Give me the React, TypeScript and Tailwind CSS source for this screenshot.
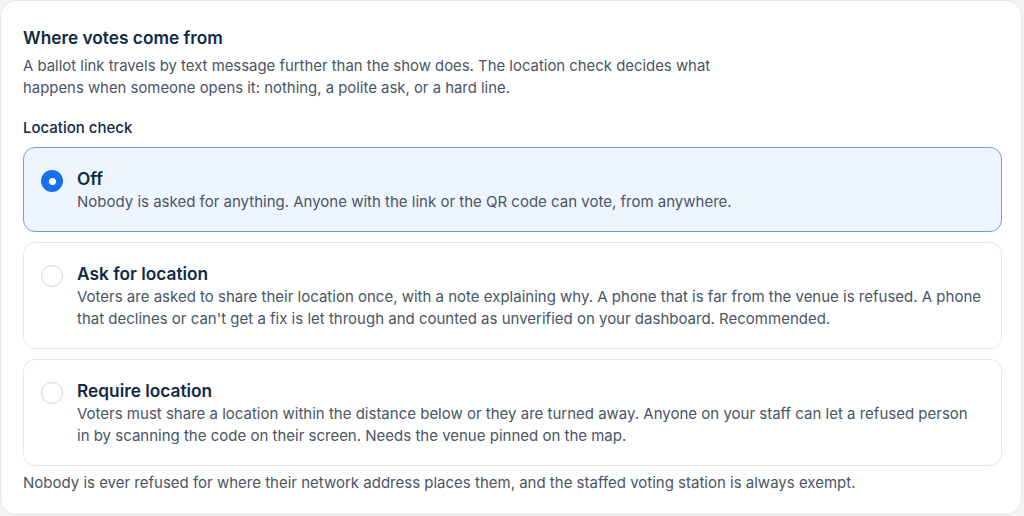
import { useState } from 'react';

const options = [
  {
    id: 'off',
    title: 'Off',
    body: 'Nobody is asked for anything. Anyone with the link or the QR code can vote, from anywhere.',
  },
  {
    id: 'ask',
    title: 'Ask for location',
    body: "Voters are asked to share their location once, with a note explaining why. A phone that is far from the venue is refused. A phone that declines or can't get a fix is let through and counted as unverified on your dashboard. Recommended.",
  },
  {
    id: 'require',
    title: 'Require location',
    body: 'Voters must share a location within the distance below or they are turned away. Anyone on your staff can let a refused person in by scanning the code on their screen. Needs the venue pinned on the map.',
  },
];

export default function App() {
  const [mode, setMode] = useState('off');

  return (
    <div className="min-h-screen bg-[#f3f4f6] font-['Inter',sans-serif]">
      <div className="w-[1022px] h-[515px] bg-white border border-[#e4e7eb] rounded-2xl pl-[22px] pr-[19px] pt-[25px]">
        <h2 className="text-[17.3px] leading-6 font-semibold text-[#102a43]">Where votes come from</h2>
        <p className="mt-[5px] max-w-[720px] text-[14.9px] leading-[22px] text-[#4a5565]">
          A ballot link travels by text message further than the show does. The location check decides what happens when someone opens it: nothing, a polite ask, or a hard line.
        </p>

        <div className="mt-[19px] text-[15px] leading-5 font-medium text-[#102a43]">Location check</div>

        <div className="mt-[9px] flex flex-col gap-[10px]">
          {options.map((o) => {
            const active = mode === o.id;
            return (
              <label
                key={o.id}
                onClick={() => setMode(o.id)}
                className={
                  'flex gap-[14px] rounded-xl border pl-[17px] pr-[17px] pt-[19px] pb-[17px] cursor-pointer ' +
                  (active ? 'border-[#6a9cf0] bg-[#eef5ff]' : 'border-[#e6e8eb] bg-white')
                }
              >
                <span className="mt-[3px] shrink-0">
                  {active ? (
                    <span className="flex w-[22px] h-[22px] items-center justify-center rounded-full bg-[#1a6ff0]">
                      <span className="w-[7px] h-[7px] rounded-full bg-white" />
                    </span>
                  ) : (
                    <span className="block w-[22px] h-[22px] rounded-full border-[1.5px] border-[#d3d7dd] bg-white" />
                  )}
                </span>
                <span className="flex flex-col">
                  <span className="text-[17.3px] leading-6 font-semibold text-[#102a43]">{o.title}</span>
                  <span className="text-[15px] leading-[22.5px] text-[#4a5565]">{o.body}</span>
                </span>
              </label>
            );
          })}
        </div>

        <p className="mt-[6px] text-[15px] leading-[22px] text-[#4a5565]">
          Nobody is ever refused for where their network address places them, and the staffed voting station is always exempt.
        </p>
      </div>
    </div>
  );
}
